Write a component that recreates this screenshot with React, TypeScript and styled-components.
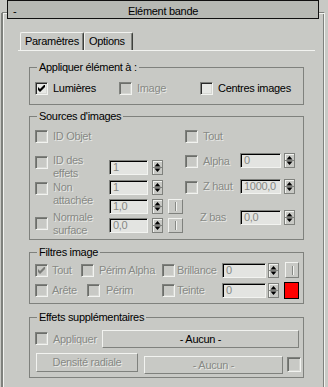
import React from "react";
import styled, { createGlobalStyle } from "styled-components";

const BG = "#c8c9c5";
const SHADE = "#7f817d";
const HILITE = "#f2f3f0";
const DISABLED = "#878985";
const FIELD = "#e3e4e1";

const GlobalStyle = createGlobalStyle`
  html, body {
    margin: 0;
    padding: 0;
    background: ${BG};
  }
  body {
    width: 328px;
    height: 387px;
    overflow: hidden;
    font-family: "Liberation Sans", Arial, sans-serif;
    font-size: 11px;
    line-height: 13px;
    letter-spacing: -0.3px;
    color: #000;
  }
`;

const Rollout = styled.div`
  margin: 12px 0 0 2px;
  width: 323px;
  height: 380px;
  box-sizing: border-box;
  border-top: 1px solid ${SHADE};
  border-left: 1px solid ${SHADE};
  border-right: 1px solid ${HILITE};
  box-shadow: inset 1px 1px 0 ${HILITE}, inset -1px 0 0 ${SHADE}, -2px 0 0 -1px ${SHADE};
`;

const TitleBar = styled.div`
  display: grid;
  grid-template-columns: 24px 1fr 24px;
  margin: -13px 0 0 4px;
  width: 312px;
  height: 19px;
  box-sizing: border-box;
  padding-top: 4px;
  border: 1px solid #101010;
  background: #b7b9b4;
`;

const Collapse = styled.span`
  padding-left: 5px;
`;

const TitleText = styled.span`
  text-align: center;
`;

const TabStrip = styled.div`
  display: flex;
  margin: 13px 0 0 15px;
  padding-left: 2px;
  width: 295px;
  height: 18px;
  border-bottom: 1px solid ${HILITE};
`;

const Tab = styled.div<{ $w: number }>`
  width: ${(p) => p.$w}px;
  height: 18px;
  box-sizing: border-box;
  padding: 2px 0 0 4px;
  border-top: 1px solid ${HILITE};
  border-left: 1px solid ${HILITE};
  border-right: 1px solid #3e403c;
  border-radius: 2px 2px 0 0;
  box-shadow: inset -1px 0 0 ${SHADE};
`;

const Group = styled.fieldset<{ $pad: string; $mt: number }>`
  margin: ${(p) => p.$mt}px 0 0 26px;
  width: 275px;
  box-sizing: border-box;
  padding: ${(p) => p.$pad};
  border: 1px solid ${SHADE};
  min-inline-size: 0;
`;

const Legend = styled.legend`
  margin-left: 2px;
  padding: 0 2px;
  line-height: 13px;
`;

const Row = styled.div<{ $h: number; $mt?: number; $center?: boolean }>`
  display: flex;
  align-items: ${(p) => (p.$center ? "center" : "flex-start")};
  height: ${(p) => p.$h}px;
  margin-top: ${(p) => p.$mt ?? 0}px;
`;

const Columns = styled.div`
  display: flex;
`;

const Column = styled.div<{ $w?: number }>`
  display: flex;
  flex-direction: column;
  width: ${(p) => (p.$w ? `${p.$w}px` : "auto")};
  flex: none;
`;

const Stack = styled.div<{ $top?: number }>`
  display: flex;
  flex-direction: column;
  margin-top: ${(p) => p.$top ?? 0}px;
`;

const Item = styled.div<{ $w: number }>`
  display: flex;
  align-items: center;
  width: ${(p) => p.$w}px;
  flex: none;
`;

const Box = styled.span<{ $dim?: boolean; $top?: number; $ml?: number; $w?: number; $h?: number }>`
  display: flex;
  align-items: center;
  justify-content: center;
  flex: none;
  width: ${(p) => p.$w ?? 13}px;
  height: ${(p) => p.$h ?? 13}px;
  margin-top: ${(p) => p.$top ?? 0}px;
  margin-left: ${(p) => p.$ml ?? 0}px;
  box-sizing: border-box;
  border-top: 1px solid ${SHADE};
  border-left: 1px solid ${SHADE};
  border-bottom: 1px solid ${HILITE};
  border-right: 1px solid ${HILITE};
  box-shadow: inset 1px 1px 0 ${(p) => (p.$dim ? "#6c6e6a" : "#2a2a2a")}, inset -1px -1px 0 #d6d7d3;
  background: ${(p) => (p.$dim ? BG : "#e7e8e5")};
`;

const Text = styled.span<{ $dim?: boolean; $w?: number; $ml?: number; $top?: number }>`
  flex: none;
  width: ${(p) => (p.$w ? `${p.$w}px` : "auto")};
  margin-left: ${(p) => p.$ml ?? 5}px;
  margin-top: ${(p) => p.$top ?? 0}px;
  white-space: nowrap;
  color: ${(p) => (p.$dim ? DISABLED : "#000")};
  text-shadow: ${(p) => (p.$dim ? "1px 1px 0 #e9eae7" : "none")};
`;

const Field = styled.div<{ $w: number; $top?: number }>`
  flex: none;
  width: ${(p) => p.$w}px;
  height: 15px;
  margin-top: ${(p) => p.$top ?? 0}px;
  box-sizing: border-box;
  padding-left: 3px;
  border-top: 1px solid ${SHADE};
  border-left: 1px solid ${SHADE};
  border-bottom: 1px solid ${HILITE};
  border-right: 1px solid ${HILITE};
  box-shadow: inset 1px 1px 0 #000;
  background: ${FIELD};
  color: ${DISABLED};
  line-height: 13px;
`;

const SpinBox = styled.div<{ $ml: number; $top: number }>`
  display: flex;
  flex: none;
  width: 11px;
  height: 15px;
  margin-left: ${(p) => p.$ml}px;
  margin-top: ${(p) => p.$top}px;
  box-sizing: border-box;
  border: 1px solid ${SHADE};
  box-shadow: inset 1px 1px 0 ${HILITE};
`;

const PushButton = styled.div<{ $w: number; $h: number; $dim?: boolean; $ml?: number; $top?: number }>`
  display: flex;
  align-items: center;
  justify-content: center;
  flex: none;
  width: ${(p) => p.$w}px;
  height: ${(p) => p.$h}px;
  margin-left: ${(p) => p.$ml ?? 0}px;
  margin-top: ${(p) => p.$top ?? 0}px;
  box-sizing: border-box;
  border-top: 1px solid ${HILITE};
  border-left: 1px solid ${HILITE};
  border-bottom: 1px solid ${SHADE};
  border-right: 1px solid ${SHADE};
  color: ${(p) => (p.$dim ? DISABLED : "#000")};
  text-shadow: ${(p) => (p.$dim ? "1px 1px 0 #e9eae7" : "none")};
  white-space: nowrap;
`;

const Bar = styled.span`
  width: 1px;
  height: 9px;
  background: ${DISABLED};
  box-shadow: 1px 0 0 ${HILITE};
`;

const Swatch = styled.div`
  flex: none;
  width: 15px;
  height: 17px;
  margin-left: 5px;
  box-sizing: border-box;
  border: 1px solid #000;
  background: #ff0000;
`;

const Check = ({ on, dim, top, ml, w, h }: { on?: boolean; dim?: boolean; top?: number; ml?: number; w?: number; h?: number }) => (
  <Box $dim={dim} $top={top} $ml={ml} $w={w} $h={h}>
    {on && (
      <svg width="7" height="7" viewBox="0 0 7 7">
        <path d="M0 2 L2 4 L7 -1 L7 2 L2 7 L0 5 Z" fill={dim ? "#7a7c78" : "#000"} />
      </svg>
    )}
  </Box>
);

const Spinner = ({ ml = 4, top = 0 }: { ml?: number; top?: number }) => (
  <SpinBox $ml={ml} $top={top}>
    <svg width="9" height="13" viewBox="0 0 9 13">
      <path d="M4.5 2 L7.5 5.5 L1.5 5.5 Z" fill="#000" />
      <line x1="0" y1="6.5" x2="9" y2="6.5" stroke={SHADE} />
      <path d="M1.5 7.5 L7.5 7.5 L4.5 11 Z" fill="#000" />
    </svg>
  </SpinBox>
);

const PickButton = ({ ml = 5, top = 0, w = 15, h = 15 }: { ml?: number; top?: number; w?: number; h?: number }) => (
  <PushButton $w={w} $h={h} $ml={ml} $top={top}>
    <Bar />
  </PushButton>
);

export default function App() {
  return (
    <>
      <GlobalStyle />
      <Rollout>
        <TitleBar>
          <Collapse>-</Collapse>
          <TitleText>Elément bande</TitleText>
          <span />
        </TitleBar>

        <TabStrip>
          <Tab $w={64}>Paramètres</Tab>
          <Tab $w={49}>Options</Tab>
        </TabStrip>

        <Group $mt={10} $pad="8px 5px 9px">
          <Legend>Appliquer élément à :</Legend>
          <Row $h={13}>
            <Item $w={84}>
              <Check on />
              <Text>Lumières</Text>
            </Item>
            <Item $w={81}>
              <Check dim />
              <Text $dim>Image</Text>
            </Item>
            <Item $w={90}>
              <Check />
              <Text>Centres images</Text>
            </Item>
          </Row>
        </Group>

        <Group $mt={5} $pad="7px 5px 2px">
          <Legend>Sources d'images</Legend>
          <Columns>
            <Column $w={150}>
              <Row $h={13}>
                <Check dim />
                <Text $dim>ID Objet</Text>
              </Row>
              <Row $h={26} $mt={11}>
                <Check dim top={2} />
                <Text $dim $w={56}>
                  ID des
                  <br />
                  effets
                </Text>
                <Field $w={39} $top={6}>1</Field>
                <Spinner top={6} />
              </Row>
              <Row $h={30} $mt={1}>
                <Check dim top={1} />
                <Text $dim $w={56}>
                  Non
                  <br />
                  attachée
                </Text>
                <Stack $top={-1}>
                  <Row $h={15}>
                    <Field $w={39}>1</Field>
                    <Spinner />
                  </Row>
                  <Row $h={15} $mt={4}>
                    <Field $w={39}>1,0</Field>
                    <Spinner />
                    <PickButton />
                  </Row>
                </Stack>
              </Row>
              <Row $h={26}>
                <Check dim top={6} />
                <Text $dim $w={56}>
                  Normale
                  <br />
                  surface
                </Text>
                <Field $w={39} $top={7}>0,0</Field>
                <Spinner top={7} />
                <PickButton top={7} />
              </Row>
            </Column>
            <Column>
              <Row $h={13}>
                <Check dim />
                <Text $dim>Tout</Text>
              </Row>
              <Row $h={15} $mt={10}>
                <Check dim top={2} />
                <Text $dim $w={37} $top={2}>Alpha</Text>
                <Field $w={41}>0</Field>
                <Spinner ml={3} />
              </Row>
              <Row $h={15} $mt={11}>
                <Check dim top={2} />
                <Text $dim $w={37} $top={1}>Z haut</Text>
                <Field $w={41}>1000,0</Field>
                <Spinner ml={3} />
              </Row>
              <Row $h={15} $mt={16}>
                <Text $dim $ml={15} $w={40} $top={1}>Z bas</Text>
                <Field $w={41}>0,0</Field>
                <Spinner ml={3} />
              </Row>
            </Column>
          </Columns>
        </Group>

        <Group $mt={6} $pad="3px 5px 4px">
          <Legend>Filtres image</Legend>
          <Row $h={16} $center>
            <Item $w={46}>
              <Check dim on />
              <Text $dim $ml={4}>Tout</Text>
            </Item>
            <Item $w={81}>
              <Check dim />
              <Text $dim>Périm Alpha</Text>
            </Item>
            <Item $w={60}>
              <Check dim />
              <Text $dim $ml={2}>Brillance</Text>
            </Item>
            <Field $w={44}>0</Field>
            <Spinner ml={2} />
            <PickButton ml={6} w={14} h={16} />
          </Row>
          <Row $h={17} $mt={4} $center>
            <Item $w={52}>
              <Check dim />
              <Text $dim $ml={4}>Arête</Text>
            </Item>
            <Item $w={75}>
              <Check dim />
              <Text $dim $ml={6}>Périm</Text>
            </Item>
            <Item $w={60}>
              <Check dim />
              <Text $dim $ml={2}>Teinte</Text>
            </Item>
            <Field $w={44}>0</Field>
            <Spinner ml={2} />
            <Swatch />
          </Row>
        </Group>

        <Group $mt={7} $pad="6px 5px 3px">
          <Legend>Effets supplémentaires</Legend>
          <Row $h={18}>
            <Check dim top={2} />
            <Text $dim $w={49} $top={3}>Appliquer</Text>
            <PushButton $w={197} $h={18}>- Aucun -</PushButton>
          </Row>
          <Row $h={21} $mt={5}>
            <PushButton $w={102} $h={19} $ml={1} $dim>Densité radiale</PushButton>
            <PushButton $w={139} $h={18} $ml={6} $top={3} $dim>- Aucun -</PushButton>
            <Check dim top={4} ml={4} w={14} h={15} />
          </Row>
        </Group>
      </Rollout>
    </>
  );
}
